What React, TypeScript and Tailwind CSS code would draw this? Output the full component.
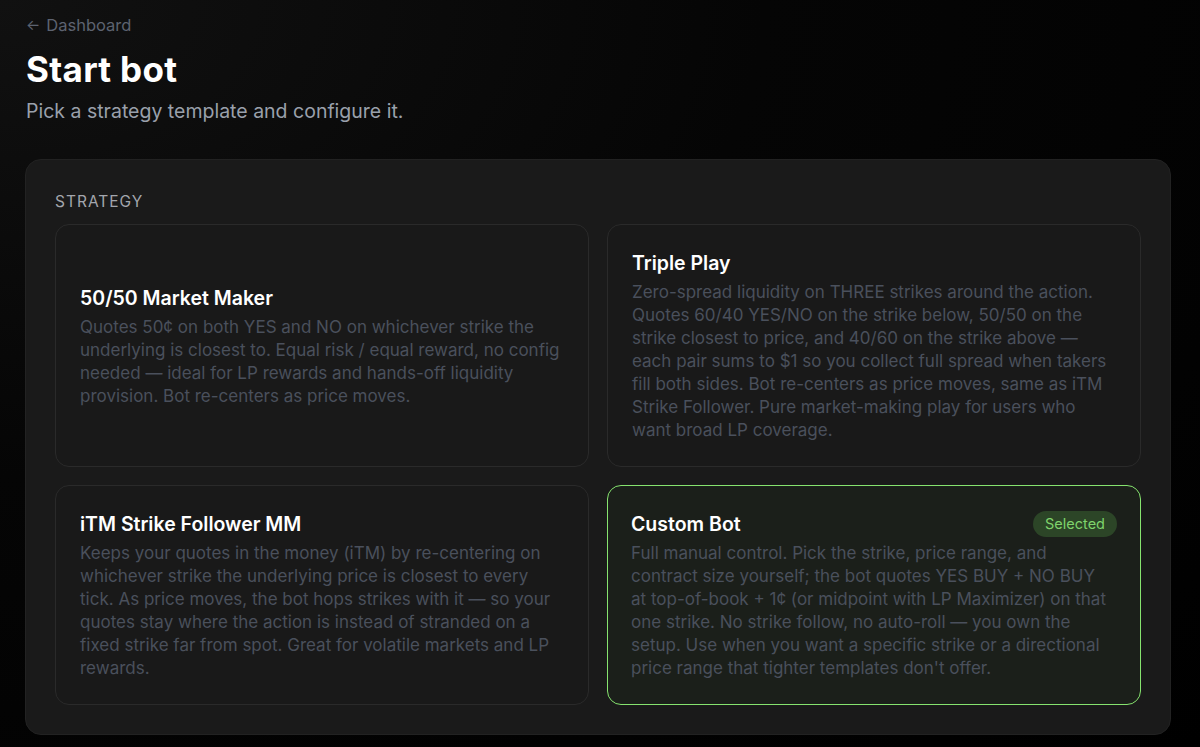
import React, { useState } from "react";

interface Strategy {
  id: string;
  name: string;
  description: string;
}

const strategies: Strategy[] = [
  {
    id: "fifty",
    name: "50/50 Market Maker",
    description:
      "Quotes 50¢ on both YES and NO on whichever strike the underlying is closest to. Equal risk / equal reward, no config needed — ideal for LP rewards and hands-off liquidity provision. Bot re-centers as price moves.",
  },
  {
    id: "triple",
    name: "Triple Play",
    description:
      "Zero-spread liquidity on THREE strikes around the action. Quotes 60/40 YES/NO on the strike below, 50/50 on the strike closest to price, and 40/60 on the strike above — each pair sums to $1 so you collect full spread when takers fill both sides. Bot re-centers as price moves, same as iTM Strike Follower. Pure market-making play for users who want broad LP coverage.",
  },
  {
    id: "itm",
    name: "iTM Strike Follower MM",
    description:
      "Keeps your quotes in the money (iTM) by re-centering on whichever strike the underlying price is closest to every tick. As price moves, the bot hops strikes with it — so your quotes stay where the action is instead of stranded on a fixed strike far from spot. Great for volatile markets and LP rewards.",
  },
  {
    id: "custom",
    name: "Custom Bot",
    description:
      "Full manual control. Pick the strike, price range, and contract size yourself; the bot quotes YES BUY + NO BUY at top-of-book + 1¢ (or midpoint with LP Maximizer) on that one strike. No strike follow, no auto-roll — you own the setup. Use when you want a specific strike or a directional price range that tighter templates don't offer.",
  },
];

export default function App() {
  const [selected, setSelected] = useState("custom");

  return (
    <div
      className="min-h-screen bg-[radial-gradient(ellipse_at_top_left,#111111_0%,#050505_45%,#000000_100%)] px-[25px] pt-[14px] pb-[13px] text-white"
      style={{ fontFamily: "Inter, 'Noto Sans', sans-serif" }}
    >
      {/* Header */}
      <div className="pl-[1px]">
        <a className="flex items-center gap-[6px] text-[16.5px] leading-[22px] text-[#5d6370]">
          <span className="text-[15px]">←</span>
          <span>Dashboard</span>
        </a>
        <h1 className="mt-[12px] text-[35px] font-bold leading-[42px] tracking-[0.3px] text-white">
          Start bot
        </h1>
        <p className="mt-[9px] text-[19.5px] leading-[24px] text-[#9aa0ab]">
          Pick a strategy template and configure it.
        </p>
      </div>

      {/* Strategy panel */}
      <div className="mt-[36px] w-[1146px] rounded-[16px] border border-[#222222] bg-[#1a1a1a] px-[29px] pt-[30px] pb-[29px]">
        <div className="text-[15.5px] leading-[24px] tracking-[1px] text-[#a3a6ad]">
          STRATEGY
        </div>
        <div className="mt-[10px] grid grid-cols-2 gap-[18px]">
          {strategies.map((s) => {
            const isSelected = s.id === selected;
            return (
              <button
                key={s.id}
                onClick={() => setSelected(s.id)}
                className={
                  isSelected
                    ? "flex flex-col justify-center rounded-[14px] border-[1.5px] border-[#86e36f] bg-[#1b1f1a] p-[23px] text-left"
                    : "flex flex-col justify-center rounded-[14px] border border-[#2a2a2a] bg-[#191919] p-[24px] text-left"
                }
              >
                <div className="flex items-center justify-between">
                  <h3 className="text-[19.5px] font-semibold leading-[28px] text-white">
                    {s.name}
                  </h3>
                  {isSelected && (
                    <span className="rounded-full bg-[#2c4527] px-[12px] py-[2px] text-[14.5px] leading-[22px] text-[#7fd36c]">
                      Selected
                    </span>
                  )}
                </div>
                <p
                  className={
                    isSelected
                      ? "mt-[4px] pr-[3px] text-[17px] leading-[23px] text-[#4a505c]"
                      : "mt-[4px] text-[17px] leading-[23px] text-[#4a505c]"
                  }
                >
                  {s.description}
                </p>
              </button>
            );
          })}
        </div>
      </div>
    </div>
  );
}
